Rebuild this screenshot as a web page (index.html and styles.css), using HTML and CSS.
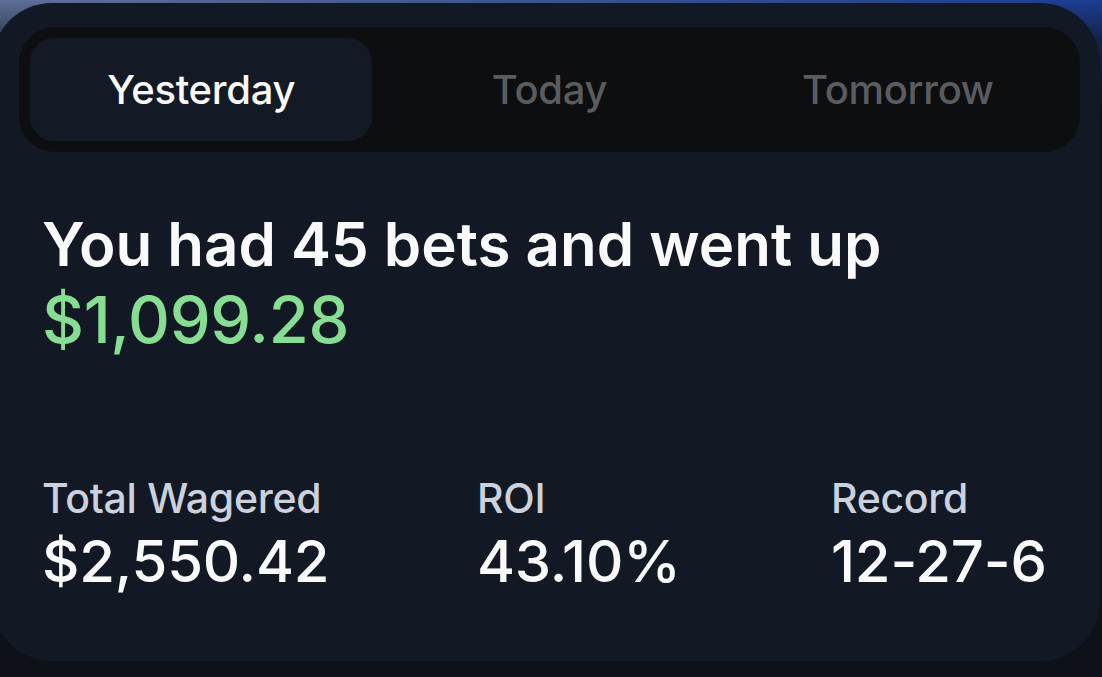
FILE: index.html
```html
<!DOCTYPE html>
<html lang="en">
<head>
<meta charset="utf-8">
<title>Daily summary</title>
<link rel="stylesheet" href="styles.css">
</head>
<body>
  <main class="card">
    <nav class="tabs">
      <button class="tab active">Yesterday</button>
      <button class="tab">Today</button>
      <button class="tab">Tomorrow</button>
    </nav>
    <section class="summary">
      <h1 class="headline">You had 45 bets and went up</h1>
      <p class="amount">$1,099.28</p>
    </section>
    <section class="stats">
      <div class="stat">
        <div class="label">Total Wagered</div>
        <div class="value">$2,550.42</div>
      </div>
      <div class="stat">
        <div class="label">ROI</div>
        <div class="value">43.10%</div>
      </div>
      <div class="stat">
        <div class="label">Record</div>
        <div class="value">12-27-6</div>
      </div>
    </section>
  </main>
</body>
</html>
```
FILE: styles.css
```css
html, body {
  margin: 0;
  padding: 0;
  height: 100%;
  overflow: hidden;
}
body {
  font-family: Inter, "Noto Sans", "Liberation Sans", sans-serif;
  background:
    linear-gradient(to bottom, rgba(15,17,25,0) 0, rgba(15,17,25,0.6) 40px, #0f1119 120px),
    linear-gradient(to right, #5f7199 0%, #3b5590 50%, #1c3d92 100%);
  color: #fafafa;
}
.card {
  box-sizing: border-box;
  margin: 3px 0 0 -8px;
  width: 1108px;
  height: 658px;
  background: #121924;
  border-radius: 60px;
  padding: 24px 20px 0 27px;
  display: flex;
  flex-direction: column;
}
.tabs {
  box-sizing: border-box;
  height: 125px;
  background: #0d0e10;
  border-radius: 36px;
  padding: 11px;
  display: grid;
  grid-template-columns: 1fr 1fr 1fr;
  gap: 6px;
}
.tab {
  border: 0;
  background: transparent;
  border-radius: 24px;
  font-family: inherit;
  font-size: 40px;
  font-weight: 500;
  color: #5b5c60;
  padding: 0;
  letter-spacing: -0.3px;
}
.tab.active {
  background: #131a25;
  color: #fafafa;
}
.summary {
  margin: 56px 0 0 23px;
}
.headline, .amount {
  margin: 0;
  line-height: 72px;
}
.headline {
  font-size: 60px;
  font-weight: 600;
  color: #fafafa;
}
.amount {
  margin-top: 4px;
  font-size: 65px;
  font-weight: 500;
  letter-spacing: -0.3px;
  color: #86de93;
}
.stats {
  margin: 117px 0 0 23px;
  display: grid;
  grid-template-columns: 435px 354px 1fr;
}
.label {
  font-size: 41px;
  line-height: 50px;
  font-weight: 500;
  color: #ccd2dd;
  letter-spacing: -0.3px;
}
.value {
  margin-top: 3px;
  font-size: 58px;
  line-height: 70px;
  font-weight: 500;
  color: #fafafa;
  letter-spacing: -0.2px;
}
```
